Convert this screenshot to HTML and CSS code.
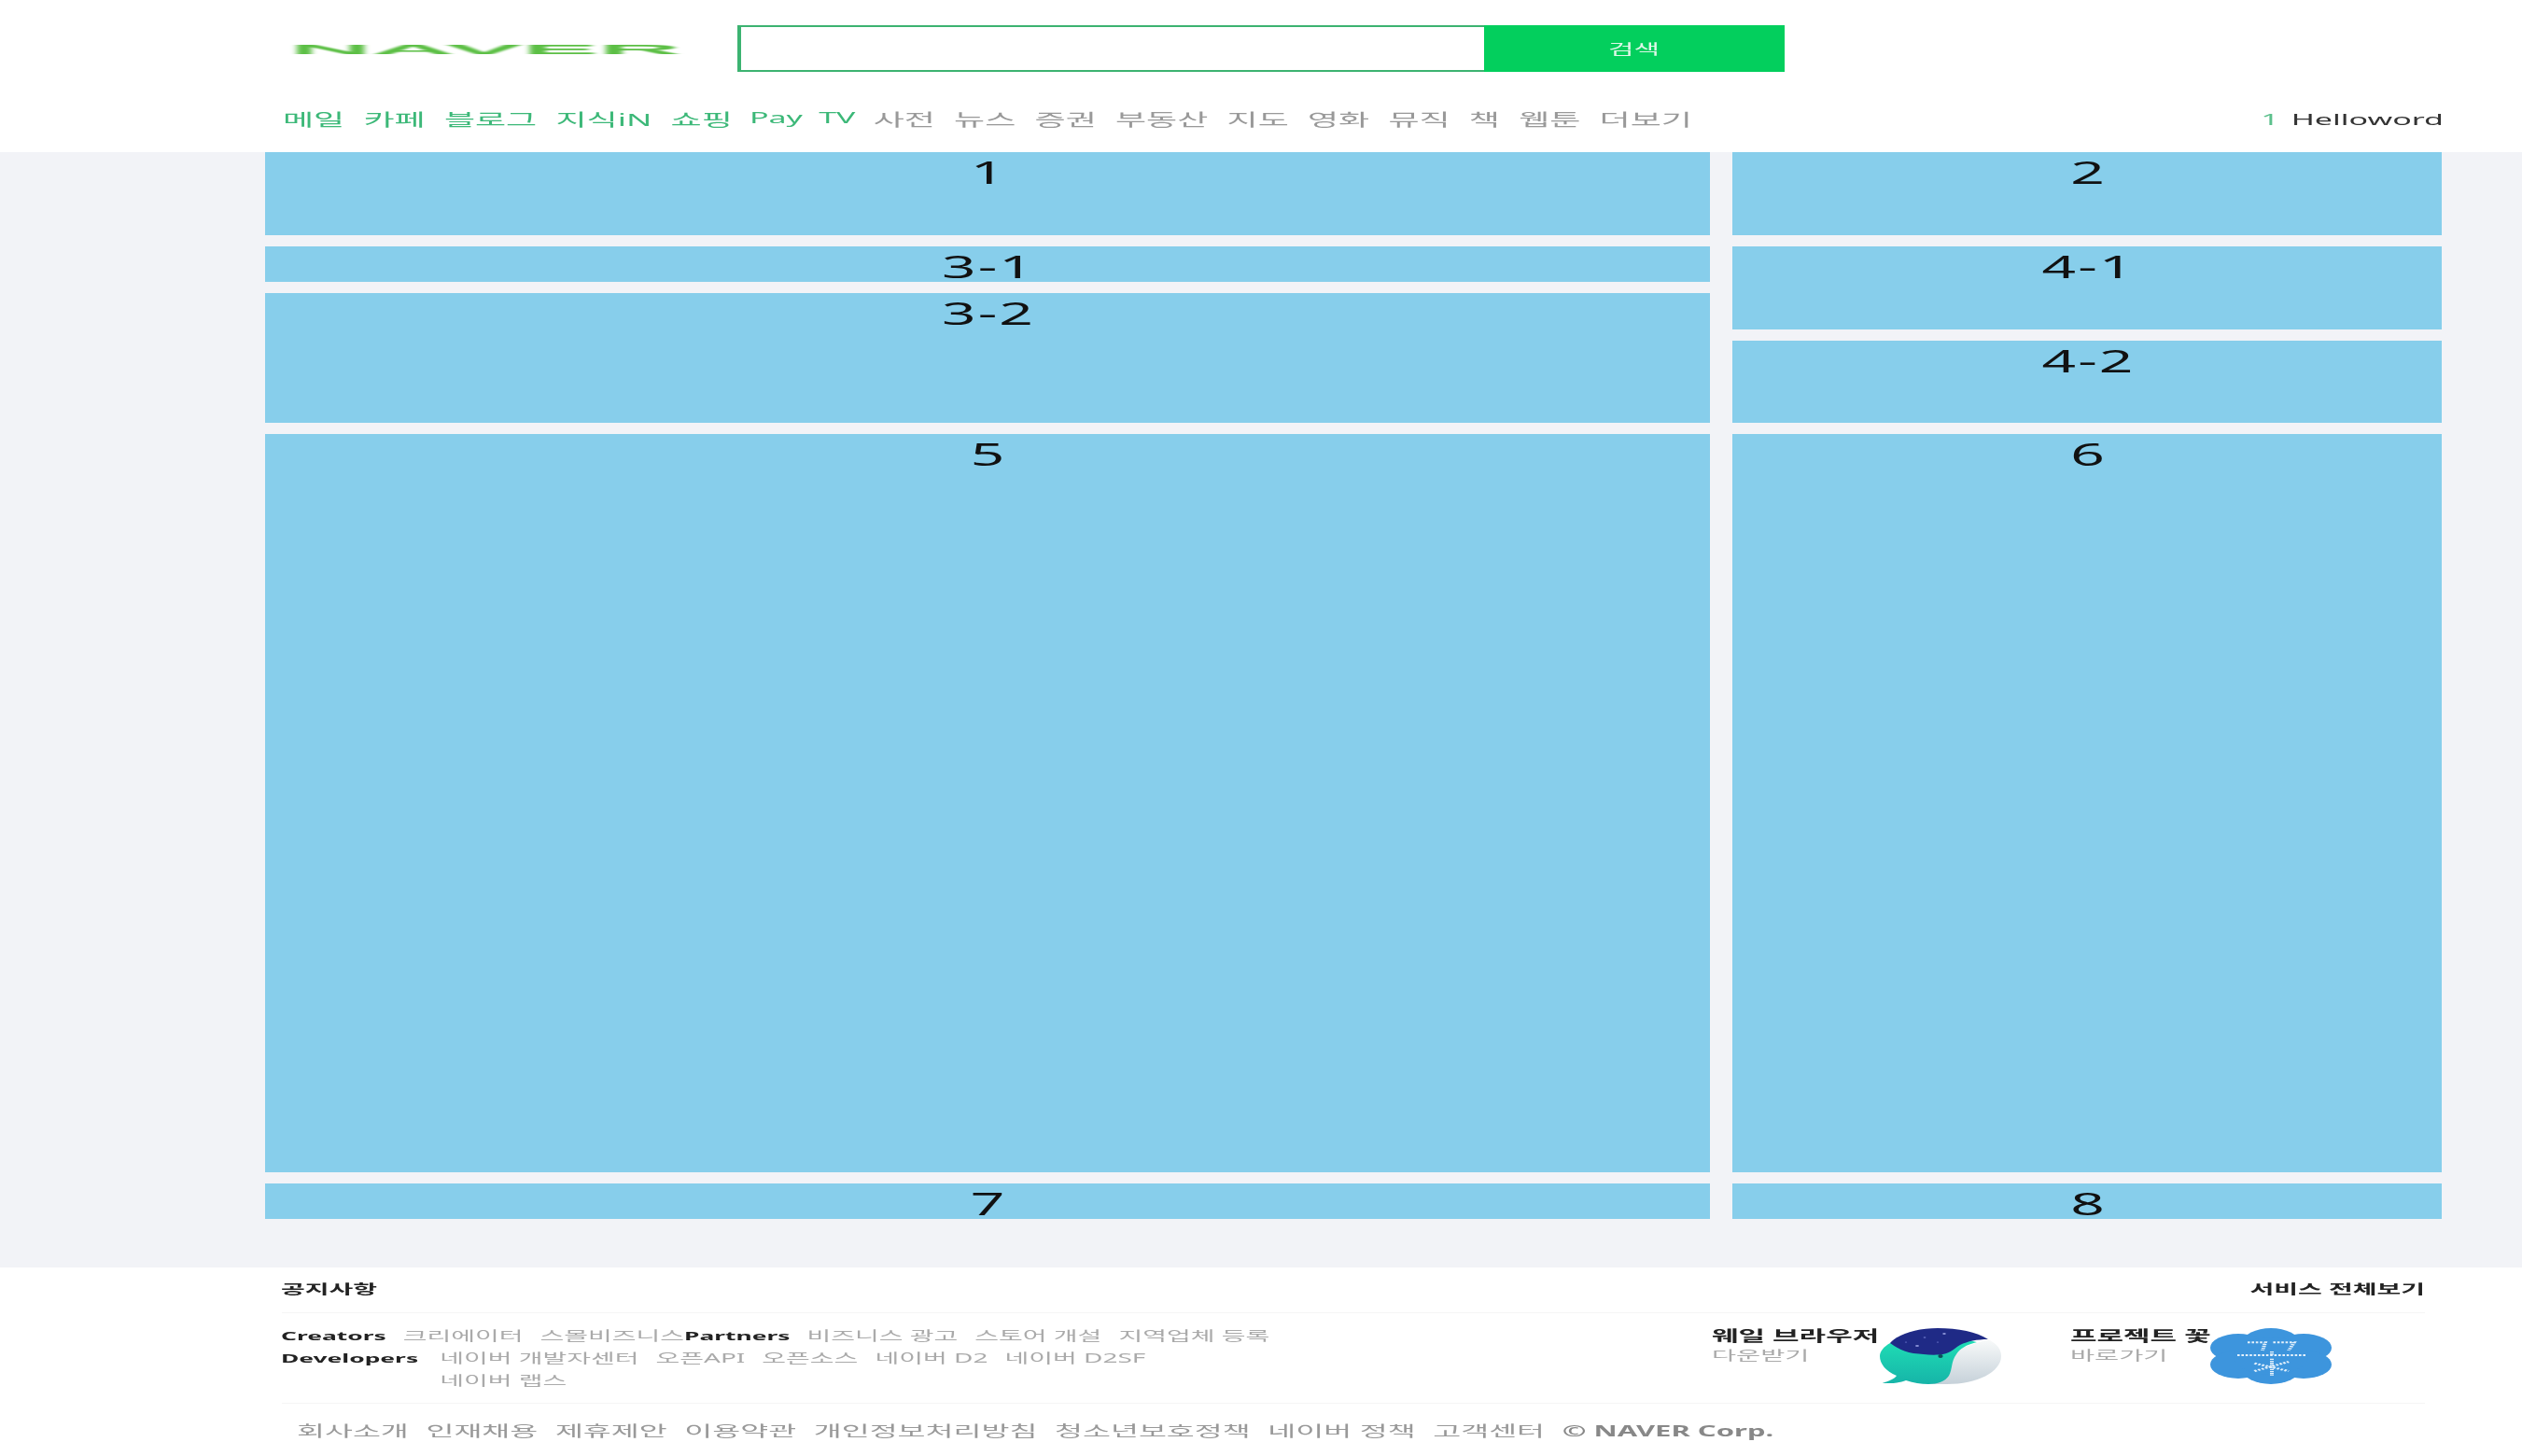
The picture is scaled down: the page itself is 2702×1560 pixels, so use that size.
FILE: index.html
```html
<!DOCTYPE html>
<html lang="ko">
<head>
  <meta charset="UTF-8">
  <meta name="viewport" content="width=device-width, initial-scale=1.0">
  <title>NAVER</title>
  <link rel="stylesheet" href="styles.css">
</head>
<body>
  <div class="stage">
    <header class="header">
      <div class="search-row">
        <div class="logo"><span class="logo-text">NAVER</span></div>
        <form class="search">
          <input class="search-input" type="text">
          <button class="search-btn" type="button">검색</button>
        </form>
      </div>
      <nav class="nav">
        <ul class="nav-list">
          <li class="nav-green">메일</li>
          <li class="nav-green">카페</li>
          <li class="nav-green">블로그</li>
          <li class="nav-green">지식iN</li>
          <li class="nav-green">쇼핑</li>
          <li class="nav-green nav-latin">Pay</li>
          <li class="nav-green nav-latin">TV</li>
          <li>사전</li>
          <li>뉴스</li>
          <li>증권</li>
          <li>부동산</li>
          <li>지도</li>
          <li>영화</li>
          <li>뮤직</li>
          <li>책</li>
          <li>웹툰</li>
          <li>더보기</li>
        </ul>
        <div class="nav-user"><span class="nav-count">1</span> <span>Helloword</span></div>
      </nav>
    </header>

    <main class="main">
      <div class="box box-top">1</div>
      <div class="box box-top">2</div>
      <div class="stack">
        <div class="box box-short">3-1</div>
        <div class="box box-fill">3-2</div>
      </div>
      <div class="stack">
        <div class="box box-fill">4-1</div>
        <div class="box box-fill">4-2</div>
      </div>
      <div class="box box-big">5</div>
      <div class="box box-big">6</div>
      <div class="box box-short">7</div>
      <div class="box box-short">8</div>
    </main>

    <footer class="footer">
      <div class="notice">
        <strong>공지사항</strong>
        <strong>서비스 전체보기</strong>
      </div>
      <div class="partner">
        <div class="partner-links">
          <div class="link-row">
            <b class="link-title">Creators</b>
            <ul class="link-list">
              <li>크리에이터</li>
              <li>스몰비즈니스</li>
            </ul>
            <b class="link-title">Partners</b>
            <ul class="link-list">
              <li>비즈니스 광고</li>
              <li>스토어 개설</li>
              <li>지역업체 등록</li>
            </ul>
          </div>
          <div class="link-row">
            <b class="link-title link-title-dev">Developers</b>
            <ul class="link-list link-list-wrap">
              <li>네이버 개발자센터</li>
              <li>오픈API</li>
              <li>오픈소스</li>
              <li>네이버 D2</li>
              <li>네이버 D2SF</li>
              <li>네이버 랩스</li>
            </ul>
          </div>
        </div>
        <div class="promo promo-whale">
          <div class="promo-text">
            <strong>웨일 브라우저</strong>
            <span>다운받기</span>
          </div>
          <svg class="promo-icon" viewBox="0 0 65 60" preserveAspectRatio="none">
            <defs>
              <linearGradient id="whaleBelly" x1="0" y1="0" x2="0" y2="1">
                <stop offset="0" stop-color="#f8fafa"/>
                <stop offset="1" stop-color="#c6d1d9"/>
              </linearGradient>
              <linearGradient id="whaleBody" x1="0" y1="0" x2="0" y2="1">
                <stop offset="0" stop-color="#20e0b6"/>
                <stop offset="1" stop-color="#16b4a8"/>
              </linearGradient>
            </defs>
            <path d="M58 12 C63 17 65 23 65 30 C65 47 52 60 36 60 L25 60 L30 30 Z" fill="url(#whaleBelly)"/>
            <path d="M5.5 16 C2 20 0 25 0 30 C0 38 3 46 9 51 C8 54 5 57 1.3 58.7 C6 59.5 11 58.5 14 56 C18 58.5 22 60 26 60 C31 60 35 57 37 51 C39 44 38 36 41 28 C43 22 46 18 52 15 L40 10 Z" fill="url(#whaleBody)"/>
            <path d="M5.5 16 C10 6 20 0 31 0 C42 0 52 4 58 12 C52 12 47 14 43 18 C39 23 37 28 32 28.5 C26 29 23 28 18 27 C13 25.5 9 21 5.5 16 Z" fill="#1f2a86"/>
            <ellipse cx="32.5" cy="30" rx="1.3" ry="2" fill="#0d4f5c"/>
            <circle cx="34.5" cy="6" r="0.9" fill="#8a93d8"/>
            <circle cx="24" cy="10" r="0.7" fill="#6a74c8"/>
            <circle cx="20" cy="19" r="1" fill="#8a93d8"/>
            <circle cx="14" cy="15" r="0.6" fill="#6a74c8"/>
            <circle cx="31" cy="15" r="0.6" fill="#6a74c8"/>
          </svg>
        </div>
        <div class="promo promo-flower">
          <div class="promo-text">
            <strong>프로젝트 꽃</strong>
            <span>바로가기</span>
          </div>
          <svg class="promo-icon" viewBox="0 0 65 60" preserveAspectRatio="none">
            <g fill="#3d95dd">
              <circle cx="32.5" cy="15" r="15"/>
              <circle cx="32.5" cy="45" r="15"/>
              <circle cx="15" cy="21" r="15"/>
              <circle cx="15" cy="39" r="15"/>
              <circle cx="50" cy="21" r="15"/>
              <circle cx="50" cy="39" r="15"/>
              <circle cx="32.5" cy="30" r="20"/>
            </g>
            <g class="flower-dots">
              <path d="M20 15.3 H29.5 L28 24"/>
              <path d="M33.7 15.3 H45 L42 24"/>
              <path d="M33 25 V29"/>
              <path d="M14.5 29 H51"/>
              <path d="M33 32.7 V51"/>
              <path d="M23.7 37.7 L42 46"/>
              <path d="M23.7 46 L42 36"/>
            </g>
          </svg>
        </div>
      </div>
      <ul class="legal">
        <li>회사소개</li>
        <li>인재채용</li>
        <li>제휴제안</li>
        <li>이용약관</li>
        <li>개인정보처리방침</li>
        <li>청소년보호정책</li>
        <li>네이버 정책</li>
        <li>고객센터</li>
        <li class="legal-corp">© NAVER Corp.</li>
      </ul>
    </footer>
  </div>
</body>
</html>
```

FILE: styles.css
```css
html, body {
  margin: 0;
  padding: 0;
  background: #fff;
  overflow: hidden;
}
ul {
  list-style: none;
  margin: 0;
  padding: 0;
}

/* the whole page is stretched to double width */
.stage {
  width: 1351px;
  height: 1560px;
  display: flex;
  flex-direction: column;
  transform: scaleX(2);
  transform-origin: 0 0;
  font-family: "Noto Sans", "Noto Sans CJK KR", sans-serif;
  color: #000;
}

.header {
  height: 163px;
  background: #fff;
  box-sizing: border-box;
  padding-top: 27px;
}
.search-row {
  display: flex;
  align-items: center;
  height: 50px;
  padding-left: 155px;
}
.logo {
  width: 239.5px;
  height: 50px;
  display: flex;
  align-items: center;
}
.logo-text {
  display: inline-block;
  font-family: "Liberation Sans", sans-serif;
  font-weight: bold;
  font-size: 15px;
  line-height: 15px;
  color: #5cbf45;
  transform: scaleX(4.08);
  transform-origin: 0 50%;
  filter: blur(0.4px);
}
.search {
  display: flex;
  width: 561.5px;
  height: 50px;
}
.search-input {
  width: 400px;
  height: 50px;
  box-sizing: border-box;
  border: 2px solid #3cb371;
  border-right: none;
  outline: none;
  background: #fff;
  margin: 0;
  padding: 0;
}
.search-btn {
  flex: 1;
  border: none;
  background: #03cf5d;
  color: #dff7e8;
  font-family: inherit;
  font-size: 15px;
  padding: 0 0 2px;
}
.nav {
  display: flex;
  justify-content: space-between;
  align-items: center;
  margin-top: 36px;
  height: 28px;
  padding: 0 42px 0 151.5px;
  font-size: 18px;
}
.nav-list {
  display: flex;
  gap: 10.1px;
  color: #999;
}
.nav-green {
  color: #3cb878;
}
.nav-latin {
  font-size: 17px;
  margin-left: -1px;
  margin-right: -0.5px;
}
.nav-user {
  color: #333;
  font-size: 17px;
}
.nav-count {
  color: #5cc08c;
  margin-right: 2px;
}

.main {
  flex: 1;
  background: #f2f3f7;
  box-sizing: border-box;
  padding-left: 142px;
  display: grid;
  grid-template-columns: 773.5px 380px;
  grid-template-rows: 89px 189px 791px 38px;
  gap: 12px 12.5px;
  align-content: start;
}
.box {
  background: #87ceeb;
  text-align: center;
  text-indent: 1.5px;
  font-size: 32px;
  letter-spacing: 1px;
  color: #111;
}
.box-short {
  height: 38px;
  line-height: 44px;
}
.box-fill {
  flex: 1;
}
.stack {
  display: flex;
  flex-direction: column;
  gap: 12px;
}

.footer {
  height: 202px;
  background: #fff;
  box-sizing: border-box;
  padding: 0 52px 0 150.5px;
}
.notice {
  display: flex;
  justify-content: space-between;
  align-items: center;
  height: 49px;
  padding-bottom: 5px;
  font-size: 14px;
  color: #222;
  border-bottom: 1px solid #f5f5f5;
  box-sizing: border-box;
}
.partner {
  display: flex;
  height: 97px;
  box-sizing: border-box;
  padding-top: 12px;
  border-bottom: 1px solid #f5f5f5;
}
.partner-links {
  width: 766.5px;
  font-size: 14px;
  line-height: 24px;
}
.link-row {
  display: flex;
}
.link-title {
  font-size: 13.2px;
  color: #222;
  margin-right: 9px;
}
.link-title-dev {
  margin-right: 11.5px;
}
.link-list {
  display: flex;
  gap: 0 9px;
  color: #aaa;
}
.link-list-wrap {
  flex-wrap: wrap;
  width: 385px;
}
.promo {
  display: flex;
}
.promo-whale {
  width: 192px;
}
.promo-flower {
  width: 140px;
}
.promo-text {
  display: flex;
  flex-direction: column;
  font-size: 14.2px;
  line-height: 21px;
  padding-top: 2px;
  color: #aaa;
  white-space: nowrap;
}
.promo-text strong {
  font-size: 15.5px;
  line-height: 20px;
  color: #222;
}
.promo-icon {
  width: 65px;
  height: 60px;
  display: block;
  margin-top: 4px;
  flex: none;
}
.flower-dots path {
  fill: none;
  stroke: #e4f1fc;
  stroke-width: 2;
  stroke-dasharray: 1.3 0.9;
}
.legal {
  display: flex;
  gap: 9.3px;
  padding: 17px 0 0 8.5px;
  font-size: 16.3px;
  line-height: 24px;
  color: #999;
  white-space: nowrap;
}
.legal-corp {
  font-weight: bold;
  font-size: 15.5px;
  color: #888;
}
```
